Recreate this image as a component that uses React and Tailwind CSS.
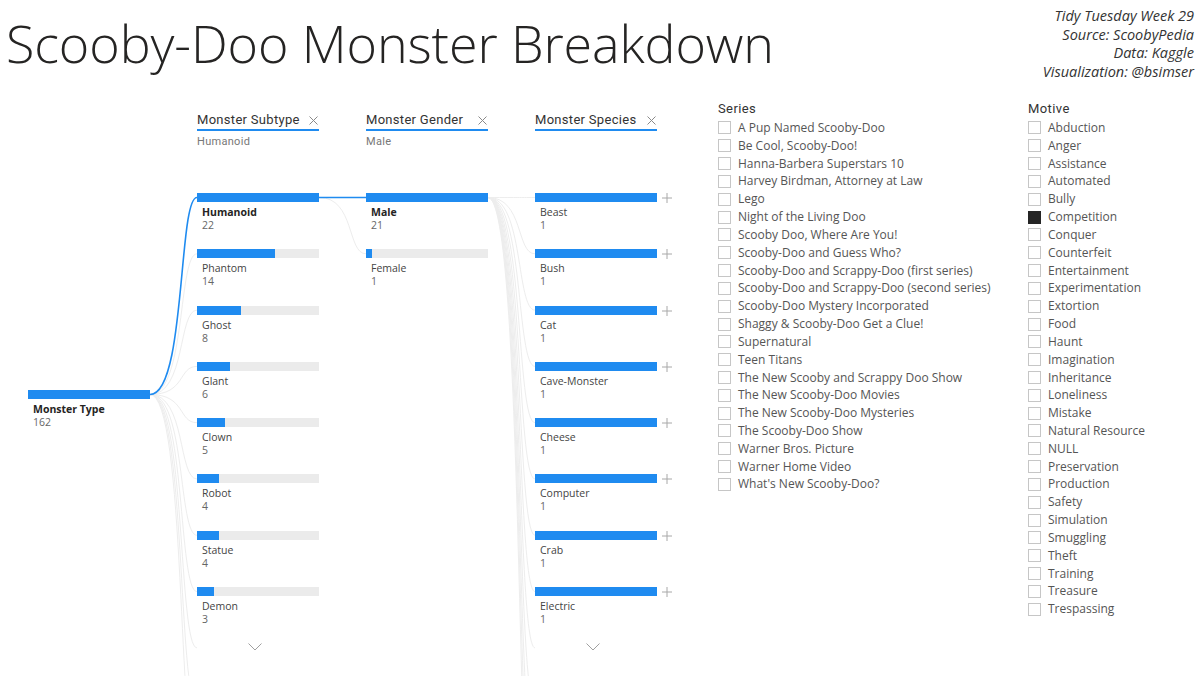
import React from "react";

const BLUE = "#1F8BF0";
const ROW = 56.3;

const subtypes = [
  ["Humanoid", 22],
  ["Phantom", 14],
  ["Ghost", 8],
  ["Glant", 6],
  ["Clown", 5],
  ["Robot", 4],
  ["Statue", 4],
  ["Demon", 3],
];
const genders = [
  ["Male", 21],
  ["Female", 1],
];
const species = [
  ["Beast", 1],
  ["Bush", 1],
  ["Cat", 1],
  ["Cave-Monster", 1],
  ["Cheese", 1],
  ["Computer", 1],
  ["Crab", 1],
  ["Electric", 1],
];

const series = [
  "A Pup Named Scooby-Doo",
  "Be Cool, Scooby-Doo!",
  "Hanna-Barbera Superstars 10",
  "Harvey Birdman, Attorney at Law",
  "Lego",
  "Night of the Living Doo",
  "Scooby Doo, Where Are You!",
  "Scooby-Doo and Guess Who?",
  "Scooby-Doo and Scrappy-Doo (first series)",
  "Scooby-Doo and Scrappy-Doo (second series)",
  "Scooby-Doo Mystery Incorporated",
  "Shaggy & Scooby-Doo Get a Clue!",
  "Supernatural",
  "Teen Titans",
  "The New Scooby and Scrappy Doo Show",
  "The New Scooby-Doo Movies",
  "The New Scooby-Doo Mysteries",
  "The Scooby-Doo Show",
  "Warner Bros. Picture",
  "Warner Home Video",
  "What's New Scooby-Doo?",
];

const motives = [
  "Abduction",
  "Anger",
  "Assistance",
  "Automated",
  "Bully",
  "Competition",
  "Conquer",
  "Counterfeit",
  "Entertainment",
  "Experimentation",
  "Extortion",
  "Food",
  "Haunt",
  "Imagination",
  "Inheritance",
  "Loneliness",
  "Mistake",
  "Natural Resource",
  "NULL",
  "Preservation",
  "Production",
  "Safety",
  "Simulation",
  "Smuggling",
  "Theft",
  "Training",
  "Treasure",
  "Trespassing",
];

const BODY = "'Open Sans', 'Noto Sans', sans-serif";
const HEAD = "Roboto, 'Noto Sans', sans-serif";

function curve(y0, y1) {
  return `M0 ${y0} C 36 ${y0}, 28 ${y1}, 47 ${y1}`;
}

function Connector({ from, targets, blueIndex }) {
  return (
    <svg width="47" height="576" className="shrink-0 block" viewBox="0 0 47 576">
      {targets.map((t, i) =>
        i === blueIndex ? null : (
          <path key={i} d={curve(from, t)} fill="none" stroke="#ededed" strokeWidth="1" />
        )
      )}
      {blueIndex != null && (
        <path d={curve(from, targets[blueIndex])} fill="none" stroke={BLUE} strokeWidth="1.6" />
      )}
    </svg>
  );
}

function XIcon() {
  return (
    <svg width="9" height="9" viewBox="0 0 9 9" className="block">
      <path d="M0.5 0.5 L8.5 8.5 M8.5 0.5 L0.5 8.5" stroke="#8a8a8a" strokeWidth="1" />
    </svg>
  );
}

function Chevron() {
  return (
    <svg width="14" height="8" viewBox="0 0 14 8" className="block">
      <path d="M0.5 0.5 L7 7 L13.5 0.5" fill="none" stroke="#a0a0a0" strokeWidth="1" />
    </svg>
  );
}

function Plus() {
  return (
    <svg width="10" height="10" viewBox="0 0 10 10" className="block">
      <path d="M5 0 V10 M0 5 H10" stroke="#a8a8a8" strokeWidth="1" />
    </svg>
  );
}

function Bar({ frac }) {
  return (
    <div className="h-[9px] w-[122px] bg-[#ebebeb]">
      <div className="h-full bg-[#1F8BF0]" style={{ width: `${frac * 122}px` }} />
    </div>
  );
}

function Column({ title, subtitle, items, max, selected, plus, chevron }) {
  return (
    <div className="flex flex-col w-[122px] shrink-0 relative">
      <div className="h-[93px] pt-[12px]">
        <div
          className="flex items-center justify-between border-b-2 border-[#1F8BF0] pb-[1px] leading-[16px] text-[13px] text-[#333] tracking-[0.3px]"
          style={{ fontFamily: HEAD }}
        >
          <span>{title}</span>
          <span className="pr-[1px]">
            <XIcon />
          </span>
        </div>
        <div
          className="mt-[4px] text-[11px] leading-[14px] text-[#777] tracking-[0.3px]"
          style={{ fontFamily: HEAD }}
        >
          {subtitle}
        </div>
      </div>
      <div className="flex flex-col">
        {items.map(([name, val], i) => (
          <div key={name} className="h-[56.3px] shrink-0 relative">
            <div className="flex items-center">
              <Bar frac={val / max} />
              {plus && (
                <div className="absolute left-[127px] top-0">
                  <Plus />
                </div>
              )}
            </div>
            <div className="pl-[5px] pt-[4px] text-[10.5px] leading-[13px]" style={{ fontFamily: BODY }}>
              <div className={i === selected ? "font-bold text-[#252423]" : "text-[#444]"}>{name}</div>
              <div className="text-[#666]">{val}</div>
            </div>
          </div>
        ))}
      </div>
      {chevron && (
        <div className="flex justify-center pr-[6px]">
          <Chevron />
        </div>
      )}
    </div>
  );
}

function Slicer({ title, items, checked, width }) {
  return (
    <div className="flex flex-col shrink-0 pt-[1px]" style={{ width }}>
      <div className="text-[13px] leading-[16px] text-[#333] tracking-[0.4px]" style={{ fontFamily: HEAD }}>
        {title}
      </div>
      <div className="mt-[2px] flex flex-col">
        {items.map((it) => (
          <div key={it} className="h-[17.83px] flex items-center gap-[7px]">
            <div
              className={
                it === checked
                  ? "w-[13px] h-[13px] bg-[#252525] border border-[#252525] shrink-0"
                  : "w-[13px] h-[13px] border border-[#c6c6c6] bg-white shrink-0"
              }
            />
            <span className="text-[12px] text-[#555] whitespace-nowrap" style={{ fontFamily: BODY }}>
              {it}
            </span>
          </div>
        ))}
      </div>
    </div>
  );
}

export default function App() {
  const from1 = 294.5;
  const t1 = Array.from({ length: 11 }, (_, i) => 97.5 + i * ROW);
  const t2 = [97.5, 97.5 + ROW];
  const t3 = Array.from({ length: 13 }, (_, i) => 97.5 + i * ROW);
  return (
    <div className="w-[1200px] h-[676px] bg-white overflow-hidden flex flex-col">
      <div className="h-[100px] flex justify-between items-start shrink-0">
        <div
          className="pl-[6px] pt-[8px] text-[52px] leading-[70px] font-light text-[#252423] whitespace-nowrap tracking-[-0.1px]"
          style={{ fontFamily: BODY }}
        >
          Scooby-Doo Monster Breakdown
        </div>
        <div
          className="pr-[6px] pt-[7px] text-right italic text-[14.5px] leading-[18.5px] text-[#333]"
          style={{ fontFamily: BODY }}
        >
          <div>Tidy Tuesday Week 29</div>
          <div>Source: ScoobyPedia</div>
          <div>Data: Kaggle</div>
          <div>Visualization: @bsimser</div>
        </div>
      </div>
      <div className="flex flex-1 pl-[28px]">
        <div className="w-[690px] shrink-0 flex">
          <div className="w-[122px] shrink-0 flex flex-col">
            <div className="h-[290px]" />
            <div className="h-[9px] w-[122px] bg-[#1F8BF0]" />
            <div className="pl-[5px] pt-[4px] text-[10.5px] leading-[13px]" style={{ fontFamily: BODY }}>
              <div className="font-bold text-[#252423]">Monster Type</div>
              <div className="text-[#666]">162</div>
            </div>
          </div>
          <Connector from={from1} targets={t1} blueIndex={0} />
          <Column title="Monster Subtype" subtitle="Humanoid" items={subtypes} max={22} selected={0} chevron />
          <Connector from={97.5} targets={t2} blueIndex={0} />
          <Column title="Monster Gender" subtitle="Male" items={genders} max={21} selected={0} />
          <Connector from={97.5} targets={t3} blueIndex={null} />
          <Column title="Monster Species" subtitle="" items={species} max={1} selected={-1} plus chevron />
        </div>
        <Slicer title="Series" items={series} width={310} />
        <Slicer title="Motive" items={motives} checked="Competition" width={160} />
      </div>
    </div>
  );
}
